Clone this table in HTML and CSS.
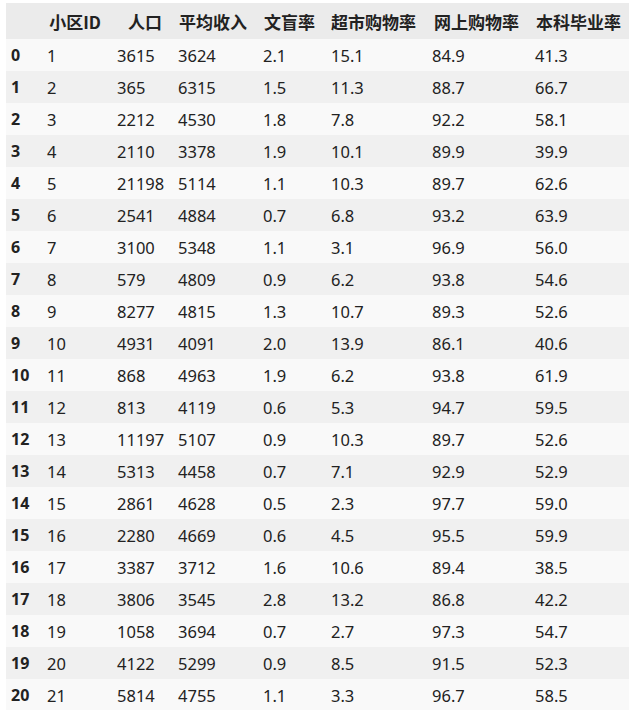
FILE: index.html
```html
<!DOCTYPE html>
<html lang="zh">
<head>
<meta charset="utf-8">
<link rel="stylesheet" href="styles.css">
</head>
<body>
<table class="df">
  <colgroup>
    <col class="c-idx"><col class="c1"><col class="c2"><col class="c3"><col class="c4"><col class="c5"><col class="c6"><col class="c7">
  </colgroup>
  <thead>
    <tr><th></th><th>小区ID</th><th>人口</th><th>平均收入</th><th>文盲率</th><th>超市购物率</th><th>网上购物率</th><th>本科毕业率</th></tr>
  </thead>
  <tbody>
    <tr><th>0</th><td>1</td><td>3615</td><td>3624</td><td>2.1</td><td>15.1</td><td>84.9</td><td>41.3</td></tr>
    <tr><th>1</th><td>2</td><td>365</td><td>6315</td><td>1.5</td><td>11.3</td><td>88.7</td><td>66.7</td></tr>
    <tr><th>2</th><td>3</td><td>2212</td><td>4530</td><td>1.8</td><td>7.8</td><td>92.2</td><td>58.1</td></tr>
    <tr><th>3</th><td>4</td><td>2110</td><td>3378</td><td>1.9</td><td>10.1</td><td>89.9</td><td>39.9</td></tr>
    <tr><th>4</th><td>5</td><td>21198</td><td>5114</td><td>1.1</td><td>10.3</td><td>89.7</td><td>62.6</td></tr>
    <tr><th>5</th><td>6</td><td>2541</td><td>4884</td><td>0.7</td><td>6.8</td><td>93.2</td><td>63.9</td></tr>
    <tr><th>6</th><td>7</td><td>3100</td><td>5348</td><td>1.1</td><td>3.1</td><td>96.9</td><td>56.0</td></tr>
    <tr><th>7</th><td>8</td><td>579</td><td>4809</td><td>0.9</td><td>6.2</td><td>93.8</td><td>54.6</td></tr>
    <tr><th>8</th><td>9</td><td>8277</td><td>4815</td><td>1.3</td><td>10.7</td><td>89.3</td><td>52.6</td></tr>
    <tr><th>9</th><td>10</td><td>4931</td><td>4091</td><td>2.0</td><td>13.9</td><td>86.1</td><td>40.6</td></tr>
    <tr><th>10</th><td>11</td><td>868</td><td>4963</td><td>1.9</td><td>6.2</td><td>93.8</td><td>61.9</td></tr>
    <tr><th>11</th><td>12</td><td>813</td><td>4119</td><td>0.6</td><td>5.3</td><td>94.7</td><td>59.5</td></tr>
    <tr><th>12</th><td>13</td><td>11197</td><td>5107</td><td>0.9</td><td>10.3</td><td>89.7</td><td>52.6</td></tr>
    <tr><th>13</th><td>14</td><td>5313</td><td>4458</td><td>0.7</td><td>7.1</td><td>92.9</td><td>52.9</td></tr>
    <tr><th>14</th><td>15</td><td>2861</td><td>4628</td><td>0.5</td><td>2.3</td><td>97.7</td><td>59.0</td></tr>
    <tr><th>15</th><td>16</td><td>2280</td><td>4669</td><td>0.6</td><td>4.5</td><td>95.5</td><td>59.9</td></tr>
    <tr><th>16</th><td>17</td><td>3387</td><td>3712</td><td>1.6</td><td>10.6</td><td>89.4</td><td>38.5</td></tr>
    <tr><th>17</th><td>18</td><td>3806</td><td>3545</td><td>2.8</td><td>13.2</td><td>86.8</td><td>42.2</td></tr>
    <tr><th>18</th><td>19</td><td>1058</td><td>3694</td><td>0.7</td><td>2.7</td><td>97.3</td><td>54.7</td></tr>
    <tr><th>19</th><td>20</td><td>4122</td><td>5299</td><td>0.9</td><td>8.5</td><td>91.5</td><td>52.3</td></tr>
    <tr><th>20</th><td>21</td><td>5814</td><td>4755</td><td>1.1</td><td>3.3</td><td>96.7</td><td>58.5</td></tr>
  </tbody>
</table>
</body>
</html>
```
FILE: styles.css
```css
html, body {
  margin: 0;
  padding: 0;
  background: #ffffff;
}
body {
  padding: 3px 0 0 6px;
  font-family: "Noto Sans", "Noto Sans CJK SC", sans-serif;
  color: #222222;
}
.df {
  border-collapse: collapse;
  border-spacing: 0;
  table-layout: fixed;
  width: 623px;
}
.c-idx { width: 33px; }
.c1 { width: 70px; }
.c2 { width: 61px; }
.c3 { width: 85px; }
.c4 { width: 68px; }
.c5 { width: 101px; }
.c6 { width: 103px; }
.c7 { width: 102px; }
.df th, .df td {
  padding: 0 8px;
  white-space: nowrap;
  vertical-align: middle;
}
.df thead tr {
  height: 36px;
  background: #ebebeb;
}
.df thead th {
  text-align: right;
  font-weight: bold;
  font-size: 17px;
  font-family: "Noto Sans CJK SC", "Noto Sans", sans-serif;
}
.df tbody tr {
  height: 32px;
}
.df tbody tr:nth-child(odd) {
  background: #f9f9f9;
}
.df tbody tr:nth-child(even) {
  background: #f0f0f0;
}
.df tbody th {
  text-align: left;
  font-weight: bold;
  font-size: 16px;
  padding-left: 5px;
  padding-right: 0;
}
.df tbody td {
  text-align: left;
  font-size: 16.5px;
}
```
